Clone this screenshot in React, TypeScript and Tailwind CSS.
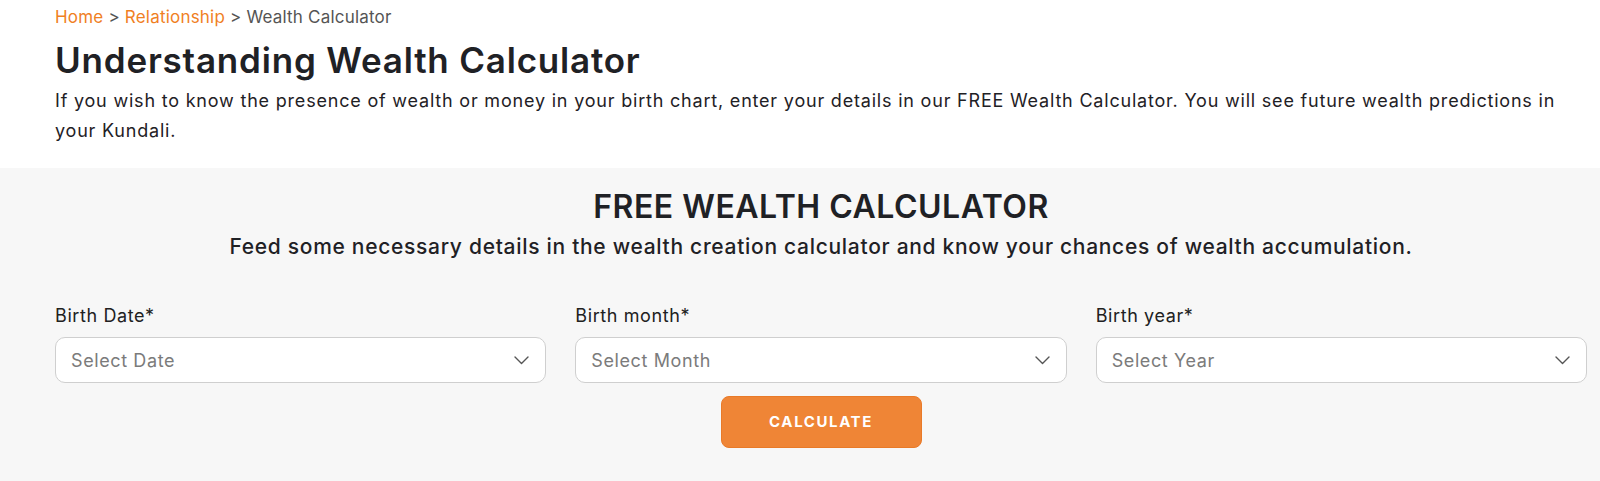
const font = { fontFamily: "Inter, 'Noto Sans', sans-serif" };

function Chevron() {
  return (
    <svg width="15" height="9" viewBox="0 0 15 9" fill="none" className="text-[#555]">
      <polyline points="1,1 7.5,7.5 14,1" stroke="currentColor" strokeWidth="1.4" strokeLinecap="round" strokeLinejoin="round" />
    </svg>
  );
}

function Field({ label, placeholder }: { label: string; placeholder: string }) {
  return (
    <div className="flex flex-col">
      <label className="text-[18px] leading-[24px] tracking-[0.6px] text-[#212121]">{label}</label>
      <div className="mt-[9px] flex h-[46px] items-center justify-between rounded-[10px] border border-[#cfcfcf] bg-white pl-[15px] pr-[16px]">
        <span className="text-[18px] tracking-[0.6px] text-[#7b7b7b]">{placeholder}</span>
        <Chevron />
      </div>
    </div>
  );
}

export default function App() {
  return (
    <div className="flex min-h-screen flex-col bg-white text-[#1f2125]" style={font}>
      <div className="pl-[55px] pr-[13px] pt-[5px] pb-[22px]">
        <nav className="text-[17px] leading-[24px] tracking-[0.2px]">
          <span className="text-[#f0801f]">Home</span>
          <span className="text-[#555]"> &gt; </span>
          <span className="text-[#f0801f]">Relationship</span>
          <span className="text-[#555]"> &gt; Wealth Calculator</span>
        </nav>
        <h1 className="mt-[9px] text-[35px] font-semibold leading-[44px] tracking-[0.8px] text-[#1f2125]">
          Understanding Wealth Calculator
        </h1>
        <p className="mt-[4px] text-[18px] leading-[30px] tracking-[0.8px] text-[#1f2125]">
          If you wish to know the presence of wealth or money in your birth chart, enter your details in our FREE Wealth Calculator. You will see future wealth predictions in your Kundali.
        </p>
      </div>
      <section className="flex-1 bg-[#f7f7f7] pl-[55px] pr-[13px] pt-[19px] pb-[30px]">
        <h2 className="text-center text-[32px] font-semibold leading-[40px] tracking-[0.5px]">FREE WEALTH CALCULATOR</h2>
        <p className="mt-[6px] text-center text-[21px] font-medium leading-[28px] tracking-[0.7px]">
          Feed some necessary details in the wealth creation calculator and know your chances of wealth accumulation.
        </p>
        <div className="mt-[43px] grid grid-cols-3 gap-[29px]">
          <Field label="Birth Date*" placeholder="Select Date" />
          <Field label="Birth month*" placeholder="Select Month" />
          <Field label="Birth year*" placeholder="Select Year" />
        </div>
        <div className="mt-[13px] flex justify-center">
          <button className="h-[52px] w-[201px] rounded-[8px] border border-[#e97a28] bg-[#ef8536] text-[15px] font-bold tracking-[1.6px] text-white">
            CALCULATE
          </button>
        </div>
      </section>
    </div>
  );
}
